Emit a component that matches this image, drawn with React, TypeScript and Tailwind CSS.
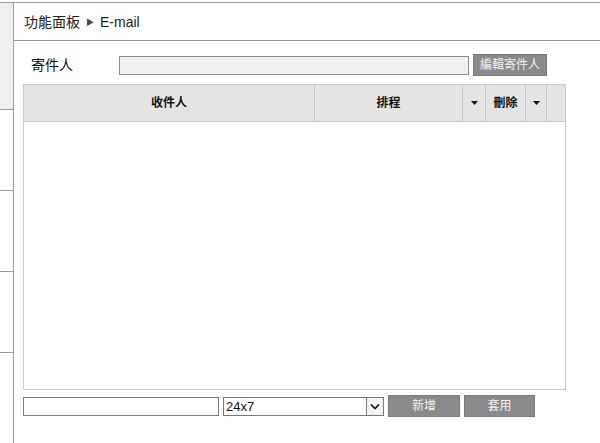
import { ReactNode } from 'react';

function Caret() {
  return (
    <svg width="7" height="4" viewBox="0 0 7 4" className="block">
      <path d="M0 0h7L3.5 4z" fill="#111" />
    </svg>
  );
}

function GrayButton({ children, className }: { children: ReactNode; className: string }) {
  return (
    <div className={`flex items-center justify-center bg-[#8a8a8a] border border-[#7a7a7a] text-[#f2f2f2] text-[12px] ${className}`}>
      {children}
    </div>
  );
}

export default function App() {
  return (
    <div
      className="w-[600px] h-[443px] bg-white overflow-hidden flex flex-col"
      style={{ fontFamily: '"Liberation Sans", "Noto Sans CJK TC", sans-serif' }}
    >
      <div className="h-[2px]" />
      <div className="flex flex-1 border-t border-[#9a9a9a]">
        {/* Left rail */}
        <div className="w-[14px] border-r border-[#9a9a9a] flex flex-col">
          <div className="h-[107px] bg-[#efefef] border-b border-[#9a9a9a]" />
          <div className="h-[81px] border-b border-[#9a9a9a]" />
          <div className="h-[81px] border-b border-[#9a9a9a]" />
          <div className="h-[81px] border-b border-[#9a9a9a]" />
        </div>

        {/* Main */}
        <div className="flex-1 flex flex-col">
          <div className="h-[38px] pt-[2px] border-b border-[#9a9a9a] flex items-center pl-[10px] text-[14px] text-[#222] gap-[6px]">
            <span>功能面板</span>
            <span className="text-[8px] text-[#444]">▶</span>
            <span>E-mail</span>
          </div>

          <div className="flex items-center h-[36px] mt-[6px]">
            <span className="ml-[17px] w-[88px] text-[14px] text-[#111]">寄件人</span>
            <div className="w-[350px] h-[19px] bg-[#f0f0f0] border border-[#8c8c8c]" />
            <GrayButton className="ml-[4px] w-[74px] h-[22px]">編輯寄件人</GrayButton>
          </div>

          <div className="ml-[9px] mt-[1px] w-[543px] h-[306px] border border-[#c8c8c8] flex flex-col">
            <div className="h-[37px] bg-[#e4e4e4] border-b border-[#c8c8c8] flex text-[12px] font-bold text-[#111]">
              <div className="w-[291px] flex items-center justify-center border-r border-[#c8c8c8]">收件人</div>
              <div className="w-[148px] flex items-center justify-center border-r border-[#c8c8c8]">排程</div>
              <div className="w-[23px] flex items-center justify-center border-r border-[#c8c8c8]">
                <Caret />
              </div>
              <div className="w-[40px] flex items-center justify-center border-r border-[#c8c8c8]">刪除</div>
              <div className="w-[21px] flex items-center justify-center border-r border-[#c8c8c8]">
                <Caret />
              </div>
              <div className="flex-1" />
            </div>
            <div className="flex-1" />
          </div>

          <div className="flex items-center ml-[9px] mt-[5px] h-[22px]">
            <div className="w-[196px] h-[19px] border border-[#7a7a7a]" />
            <div className="ml-[4px] w-[161px] h-[19px] border border-[#7a7a7a] flex items-center">
              <span className="flex-1 pl-[2px] text-[13px] text-[#111] leading-none">24x7</span>
              <div className="w-[17px] h-[17px] border-l border-[#7a7a7a] bg-[#f4f4f4] flex items-center justify-center">
                <svg width="10" height="7" viewBox="0 0 10 7">
                  <path d="M1 1.5l4 4 4-4" fill="none" stroke="#111" strokeWidth="1.6" />
                </svg>
              </div>
            </div>
            <GrayButton className="ml-[4px] w-[72px] h-[22px]">新增</GrayButton>
            <GrayButton className="ml-[4px] w-[71px] h-[22px]">套用</GrayButton>
          </div>
        </div>
      </div>
    </div>
  );
}
